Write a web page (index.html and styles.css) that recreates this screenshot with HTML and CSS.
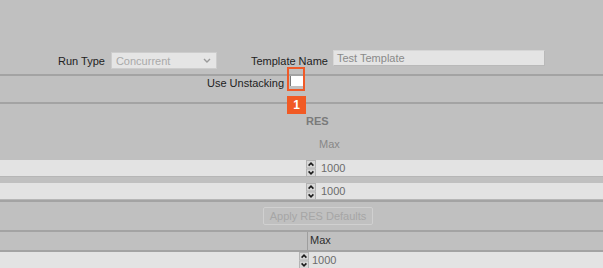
FILE: index.html
```html
<!DOCTYPE html>
<html>
<head>
<meta charset="utf-8">
<link rel="stylesheet" href="styles.css">
</head>
<body>
<div class="page">
  <div class="row1">
    <span class="lbl lbl-run">Run Type</span>
    <div class="select">
      <span>Concurrent</span>
      <svg class="caret" width="8" height="5" viewBox="0 0 8 5"><path d="M1 1 L4 4 L7 1" fill="none" stroke="#9a9a9a" stroke-width="1.4"/></svg>
    </div>
    <span class="lbl lbl-tn">Template Name</span>
    <div class="text-input">Test Template</div>
  </div>
  <div class="rule"></div>
  <div class="row2">
    <span class="lbl">Use Unstacking</span>
    <span class="cb-wrap">
      <span class="cb"></span>
      <span class="hl-box"></span>
      <span class="badge">1</span>
    </span>
  </div>
  <div class="rule"></div>
  <div class="res-title">RES</div>
  <div class="res-max">Max</div>
  <div class="band band-a">
    <svg class="spin" width="10" height="17" viewBox="0 0 10 17"><rect x="0.5" y="0.5" width="9" height="7.5" fill="#d7d7d7" stroke="#b3b3b3"/><rect x="0.5" y="9" width="9" height="7.5" fill="#d7d7d7" stroke="#b3b3b3"/><path d="M2.6 5.6 L5 3.2 L7.4 5.6" fill="none" stroke="#1a1a1a" stroke-width="1.6"/><path d="M2.6 11.4 L5 13.8 L7.4 11.4" fill="none" stroke="#1a1a1a" stroke-width="1.6"/></svg>
    <span class="num">1000</span>
  </div>
  <div class="gap"></div>
  <div class="band band-a">
    <svg class="spin" width="10" height="17" viewBox="0 0 10 17"><rect x="0.5" y="0.5" width="9" height="7.5" fill="#d7d7d7" stroke="#b3b3b3"/><rect x="0.5" y="9" width="9" height="7.5" fill="#d7d7d7" stroke="#b3b3b3"/><path d="M2.6 5.6 L5 3.2 L7.4 5.6" fill="none" stroke="#1a1a1a" stroke-width="1.6"/><path d="M2.6 11.4 L5 13.8 L7.4 11.4" fill="none" stroke="#1a1a1a" stroke-width="1.6"/></svg>
    <span class="num">1000</span>
  </div>
  <div class="rule"></div>
  <div class="btn-row"><span class="btn">Apply RES Defaults</span></div>
  <div class="rule"></div>
  <div class="head-row"><span class="head-cell">Max</span></div>
  <div class="rule"></div>
  <div class="band band-b">
    <svg class="spin" width="10" height="17" viewBox="0 0 10 17"><rect x="0.5" y="0.5" width="9" height="7.5" fill="#d7d7d7" stroke="#b3b3b3"/><rect x="0.5" y="9" width="9" height="7.5" fill="#d7d7d7" stroke="#b3b3b3"/><path d="M2.6 5.6 L5 3.2 L7.4 5.6" fill="none" stroke="#1a1a1a" stroke-width="1.6"/><path d="M2.6 11.4 L5 13.8 L7.4 11.4" fill="none" stroke="#1a1a1a" stroke-width="1.6"/></svg>
    <span class="num">1000</span>
  </div>
</div>
</body>
</html>
```

FILE: styles.css
```css
html, body {
  margin: 0;
  padding: 0;
  background: #c0c0c0;
}
body {
  font-family: "Liberation Sans", Arial, sans-serif;
  font-size: 11px;
  color: #2a2a2a;
  overflow: hidden;
}
.page {
  width: 603px;
  height: 268px;
  overflow: hidden;
}
.row1 {
  display: flex;
  align-items: flex-start;
  justify-content: center;
  padding-top: 50px;
  height: 24px;
}
.lbl {
  line-height: 17px;
  margin-top: 3px;
  color: #222;
}
.lbl-run { margin-right: 6px; }
.lbl-tn { margin-left: 34px; margin-right: 5px; }
.select {
  box-sizing: border-box;
  width: 106px;
  height: 17px;
  margin-top: 2px;
  background: #e5e5e5;
  border: 1px solid #cdcdcd;
  color: #a9a9a9;
  display: flex;
  align-items: center;
  justify-content: space-between;
  padding: 0 5px 0 4px;
}
.text-input {
  box-sizing: border-box;
  width: 212px;
  height: 16px;
  background: #e4e4e4;
  border: 1px solid #d6d6d6;
  border-right-color: #b9b9b9;
  border-bottom-color: #b9b9b9;
  color: #8a8a8a;
  line-height: 14px;
  padding-left: 3px;
}
.rule {
  height: 2px;
  background: #a3a3a3;
}
.row2 {
  height: 26px;
  display: flex;
  align-items: flex-start;
  padding-left: 207px;
}
.row2 .lbl {
  margin-top: 0;
  line-height: 14px;
}
.cb-wrap {
  position: relative;
  margin-left: 6px;
  width: 13px;
  height: 10px;
}
.cb {
  display: block;
  box-sizing: border-box;
  width: 13px;
  height: 10px;
  background: #fff;
  border-left: 1px solid #7a7a7a;
}
.hl-box {
  position: absolute;
  left: -3px;
  top: -9px;
  width: 14px;
  height: 20px;
  border: 2px solid #f05a28;
}
.badge {
  position: absolute;
  left: -3px;
  top: 20px;
  width: 19px;
  height: 18px;
  background: #f15a24;
  color: #fff;
  font-weight: bold;
  font-size: 12px;
  line-height: 18px;
  text-align: center;
}
.res-title {
  height: 14px;
  padding-top: 10px;
  line-height: 14px;
  padding-left: 306px;
  font-weight: bold;
  color: #7a7a7a;
}
.res-max {
  height: 23px;
  padding-top: 9px;
  line-height: 14px;
  padding-left: 319px;
  color: #888;
}
.band {
  box-sizing: border-box;
  height: 17px;
  background: #e3e3e3;
  border-bottom: 1px solid #b6b6b6;
  display: flex;
  align-items: center;
}
.band-a { padding-left: 306px; }
.band-b { padding-left: 299px; height: 16px; border-bottom: 0; }
.spin { display: block; flex: none; }
.num {
  color: #6b6b6b;
  margin-left: 5px;
  line-height: 16px;
}
.band-b .num { margin-left: 3px; }
.gap { height: 6px; }
.btn-row {
  height: 28px;
  display: flex;
  align-items: center;
  padding-left: 263px;
}
.btn {
  box-sizing: border-box;
  width: 110px;
  height: 18px;
  border: 1px solid #d0d0d0;
  border-radius: 2px;
  color: #a6a6a6;
  text-align: center;
  line-height: 16px;
}
.head-row {
  height: 18px;
  padding-left: 307px;
}
.head-cell {
  display: block;
  height: 18px;
  border-left: 1px solid #9e9e9e;
  padding-left: 2px;
  line-height: 17px;
  color: #2e2e2e;
}
```
